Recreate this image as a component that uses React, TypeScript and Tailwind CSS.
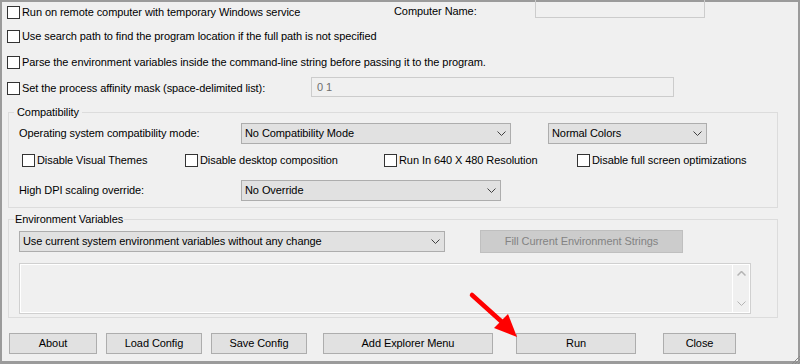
import React from "react";
import clsx from "clsx";

const Check = ({ label, className }: { label: string; className?: string }) => (
  <div className={clsx("flex items-center h-[13px] shrink-0", className)}>
    <span className="w-[13px] h-[13px] border border-[#333333] bg-white shrink-0" />
    <span className="ml-[2px] whitespace-nowrap leading-[15px]">{label}</span>
  </div>
);

const Chevron = ({ color = "#404040" }: { color?: string }) => (
  <svg width="9" height="5" viewBox="0 0 9 5" className="shrink-0">
    <polyline points="0.5,0.5 4.5,4.5 8.5,0.5" fill="none" stroke={color} strokeWidth="1" />
  </svg>
);

const Select = ({ value, className }: { value: string; className?: string }) => (
  <div
    className={clsx(
      "flex items-center justify-between h-[21px] border border-[#adadad] bg-[#e1e1e1] pl-[3px] pr-[4px] shrink-0",
      className
    )}
  >
    <span className="whitespace-nowrap">{value}</span>
    <Chevron />
  </div>
);

const Button = ({ label, className }: { label: string; className?: string }) => (
  <div
    className={clsx(
      "flex items-center justify-center h-[21px] border border-[#adadad] bg-[#e1e1e1] shrink-0 whitespace-nowrap",
      className
    )}
  >
    {label}
  </div>
);

const App = () => {
  return (
    <div className="relative w-[800px] h-[364px] overflow-hidden font-['Liberation_Sans',Arial,sans-serif] text-[11px] tracking-[-0.08px] text-black">
      <div className="w-full h-full bg-[#f0f0f0] border-2 border-b-[3px] border-[#9b9b9b] flex flex-col">
        {/* top options */}
        <div className="flex items-start h-[20px] -mt-[4px] ml-[5px]">
          <Check label="Run on remote computer with temporary Windows service" className="w-[387px] mt-[8px]" />
          <span className="w-[141px] mt-[6px] leading-[15px]">Computer Name:</span>
          <div className="w-[170px] h-[20px] border border-[#cccccc]" />
        </div>
        <Check label="Use search path to find the program location if the full path is not specified" className="ml-[5px] mt-[12px]" />
        <Check
          label="Parse the environment variables inside the command-line string before passing it to the program."
          className="ml-[5px] mt-[13px]"
        />
        <div className="flex items-center h-[20px] mt-[8px] ml-[5px]">
          <Check label="Set the process affinity mask (space-delimited list):" className="w-[304px] mt-[3px]" />
          <div className="w-[363px] h-[20px] border border-[#cccccc] flex items-center pl-[5px] text-[#6d6d6d]">0 1</div>
        </div>

        {/* compatibility */}
        <fieldset className="ml-[6px] mt-[8px] w-[770px] h-[103px] border border-[#dcdcdc] shrink-0">
          <legend className="ml-[5px] px-[3px] leading-[14px]">Compatibility</legend>
          <div className="flex items-center mt-[4px] pl-[10px]">
            <span className="w-[222px]">Operating system compatibility mode:</span>
            <Select value="No Compatibility Mode" className="w-[270px]" />
            <Select value="Normal Colors" className="w-[159px] ml-[37px]" />
          </div>
          <div className="flex items-center mt-[10px] pl-[13px]">
            <Check label="Disable Visual Themes" className="w-[163px]" />
            <Check label="Disable desktop composition" className="w-[199px]" />
            <Check label="Run In 640 X 480 Resolution" className="w-[193px]" />
            <Check label="Disable full screen optimizations" />
          </div>
          <div className="flex items-center mt-[13px] pl-[10px]">
            <span className="w-[222px]">High DPI scaling override:</span>
            <Select value="No Override" className="w-[260px]" />
          </div>
        </fieldset>

        {/* environment */}
        <fieldset className="ml-[6px] mt-[4px] w-[770px] h-[106px] border border-[#dcdcdc] shrink-0">
          <legend className="ml-[5px] px-[1px] leading-[14px]">Environment Variables</legend>
          <div className="flex items-center h-[23px] mt-[4px] pl-[10px]">
            <Select value="Use current system environment variables without any change" className="w-[426px]" />
            <div className="ml-[35px] w-[203px] h-[23px] flex items-center justify-center bg-[#cccccc] border border-[#bfbfbf] text-[#838383]">
              Fill Current Environment Strings
            </div>
          </div>
          <div className="ml-[10px] mt-[10px] w-[732px] h-[51px] border border-[#d0d0d0]">
            <div className="w-full h-full border border-white flex">
              <div className="flex-1" />
              <div className="w-[17px] border-l border-white flex flex-col items-center justify-between py-[6px]">
                <svg width="9" height="5" viewBox="0 0 9 5">
                  <polyline points="0.5,4.5 4.5,0.5 8.5,4.5" fill="none" stroke="#b4b4b4" strokeWidth="1.5" />
                </svg>
                <Chevron color="#b4b4b4" />
              </div>
            </div>
          </div>
        </fieldset>

        {/* buttons */}
        <div className="flex items-center mt-[15px] ml-[7px]">
          <Button label="About" className="w-[88px]" />
          <Button label="Load Config" className="w-[96px] ml-[9px]" />
          <Button label="Save Config" className="w-[96px] ml-[9px]" />
          <Button label="Add Explorer Menu" className="w-[170px] ml-[16px]" />
          <Button label="Run" className="w-[120px] ml-[23px]" />
          <Button label="Close" className="w-[73px] ml-[27px]" />
        </div>
      </div>

      {/* resize grip */}
      <svg className="absolute right-0 bottom-0" width="10" height="10" viewBox="0 0 10 10">
        <line x1="10" y1="2" x2="2" y2="10" stroke="#8a8a8a" strokeWidth="1" />
        <line x1="10" y1="5" x2="5" y2="10" stroke="#8a8a8a" strokeWidth="1" />
        <line x1="10" y1="8" x2="8" y2="10" stroke="#8a8a8a" strokeWidth="1" />
      </svg>

      {/* red arrow annotation */}
      <svg className="absolute left-0 top-0 pointer-events-none" width="800" height="364" viewBox="0 0 800 364">
        <line x1="472" y1="295" x2="502" y2="322" stroke="#ff0000" strokeWidth="4.5" strokeLinecap="round" />
        <polygon points="517,337 494,328 508,314" fill="#ff0000" />
      </svg>
    </div>
  );
};

export default App;
